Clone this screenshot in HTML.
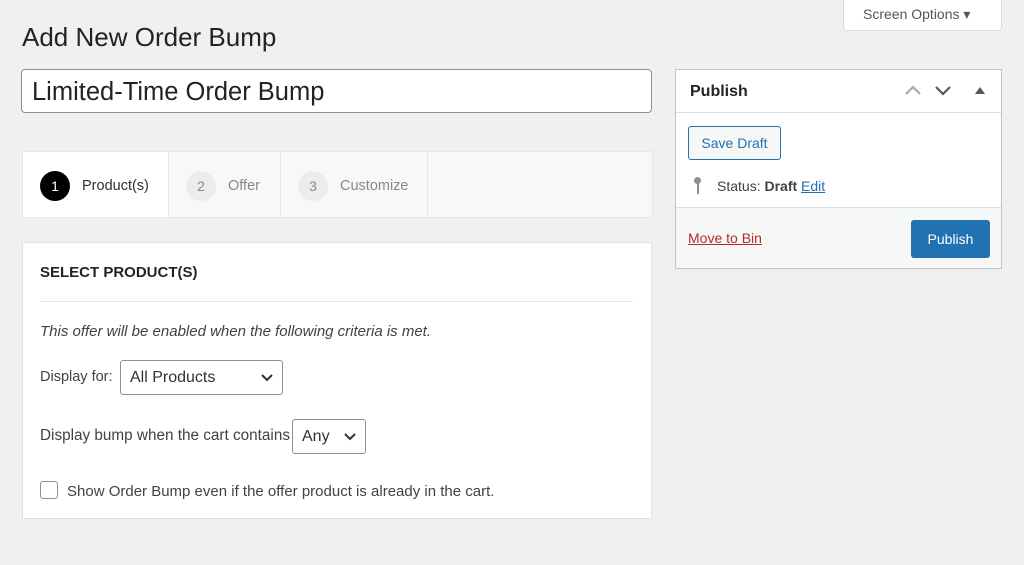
<!DOCTYPE html>
<html><head><style>
*{box-sizing:border-box;margin:0;padding:0}
body{width:1024px;height:565px;background:#f0f0f1;font-family:"Liberation Sans",sans-serif;color:#1d2327;position:relative;overflow:hidden;font-size:14px}
.abs{position:absolute}
.so{left:843px;top:0;width:159px;height:31px;background:#fff;border:1px solid #dcdcde;border-top:none;border-radius:0 0 4px 4px;color:#50575e;font-size:14px;line-height:29px;padding-left:19px}
h1{position:absolute;left:22px;top:22px;font-size:26px;font-weight:400;color:#1d2327}
.title{left:21px;top:69px;width:631px;height:44px;background:#fff;border:1px solid #8c8f94;border-radius:4px;font-size:25.5px;padding:7px 10px;line-height:30px}
.steps{left:22px;top:151px;width:631px;height:67px;background:#f8f8f8;border:1px solid #e6e6e6}
.step{position:absolute;top:0;height:65px;display:flex;align-items:center;font-size:14.5px;color:#888;padding-top:2px}
.circ{width:30px;height:30px;border-radius:50%;background:#ececec;color:#888;display:flex;align-items:center;justify-content:center;margin-right:12px;font-size:14px}
.box{left:22px;top:242px;width:630px;height:277px;background:#fff;border:1px solid #e2e2e2}
.sel{position:absolute;background:#fff;border:1px solid #8c8f94;border-radius:3px;font-size:16px;padding:0 9px;color:#2c3338}
.sel svg{position:absolute;right:9px;top:13px}
.pub{left:675px;top:69px;width:327px;height:200px;background:#fff;border:1px solid #c3c4c7}
</style></head><body>
<div class="abs so">Screen Options ▾</div>
<h1>Add New Order Bump</h1>
<div class="abs title">Limited-Time Order Bump</div>
<div class="abs steps">
 <div class="step" style="left:0;width:145px;background:#fff;padding-left:17px;color:#2c3338"><div class="circ" style="background:#000;color:#fff">1</div>Product(s)</div>
 <div class="step" style="left:145px;width:112px;border-left:1px solid #e6e6e6;padding-left:17px"><div class="circ">2</div>Offer</div>
 <div class="step" style="left:257px;width:148px;border-left:1px solid #e6e6e6;border-right:1px solid #e6e6e6;padding-left:17px"><div class="circ">3</div>Customize</div>
</div>
<div class="abs box">
 <div class="abs" style="left:17px;top:21px;font-weight:700;font-size:15px;color:#1d2327">SELECT PRODUCT(S)</div>
 <div class="abs" style="left:17px;top:58px;width:593px;border-top:1px solid #e8e8e8"></div>
 <div class="abs" style="left:17px;top:80px;font-style:italic;color:#3c434a;font-size:15px">This offer will be enabled when the following criteria is met.</div>
 <div class="abs" style="left:17px;top:126px;color:#3c434a;font-size:14.5px">Display for:</div>
 <div class="sel" style="left:97px;top:117px;width:163px;height:35px;line-height:33px">All Products<svg width="12" height="8" viewBox="0 0 12 8"><polyline points="1,1 6,6 11,1" fill="none" stroke="#2c3338" stroke-width="2"/></svg></div>
 <div class="abs" style="left:17px;top:184px;color:#3c434a;font-size:15.3px">Display bump when the cart contains</div>
 <div class="sel" style="left:269px;top:176px;width:74px;height:35px;line-height:33px">Any<svg width="12" height="8" viewBox="0 0 12 8"><polyline points="1,1 6,6 11,1" fill="none" stroke="#2c3338" stroke-width="2"/></svg></div>
 <div class="abs" style="left:17px;top:238px;width:18px;height:18px;border:1px solid #8c8f94;border-radius:3px"></div>
 <div class="abs" style="left:44px;top:240px;color:#3c434a;font-size:15px">Show Order Bump even if the offer product is already in the cart.</div>
</div>
<div class="abs pub">
 <div class="abs" style="left:14px;top:13px;font-weight:700;font-size:16px">Publish</div>
 <svg class="abs" style="left:228px;top:15px" width="18" height="11" viewBox="0 0 18 11"><polyline points="2,9 9,2 16,9" fill="none" stroke="#a7aaad" stroke-width="2.2"/></svg>
 <svg class="abs" style="left:258px;top:15px" width="18" height="11" viewBox="0 0 18 11"><polyline points="2,2 9,9 16,2" fill="none" stroke="#50575e" stroke-width="2.2"/></svg>
 <svg class="abs" style="left:299px;top:17px" width="10" height="7" viewBox="0 0 10 7"><polygon points="0,7 5,0 10,7" fill="#50575e"/></svg>
 <div class="abs" style="left:0;top:42px;width:325px;border-top:1px solid #dcdcde"></div>
 <div class="abs" style="left:12px;top:56px;width:93px;height:34px;border:1px solid #2271b1;border-radius:3px;background:#f6f7f7;color:#2271b1;line-height:32px;text-align:center">Save Draft</div>
 <div class="abs" style="left:18px;top:107px;width:7px;height:7px;border-radius:50%;background:#8c8f94"></div>
 <div class="abs" style="left:21px;top:112px;width:2px;height:12px;background:#8c8f94"></div>
 <div class="abs" style="left:41px;top:108px;color:#3c434a">Status: <b>Draft</b> <span style="color:#2271b1;text-decoration:underline">Edit</span></div>
 <div class="abs" style="left:0;top:137px;width:325px;height:61px;background:#f6f7f7;border-top:1px solid #dcdcde"></div>
 <div class="abs" style="left:12px;top:160px;color:#b32d2e;text-decoration:underline">Move to Bin</div>
 <div class="abs" style="left:235px;top:150px;width:79px;height:38px;background:#2271b1;border-radius:3px;color:#fff;line-height:38px;text-align:center">Publish</div>
</div>
</body></html>
